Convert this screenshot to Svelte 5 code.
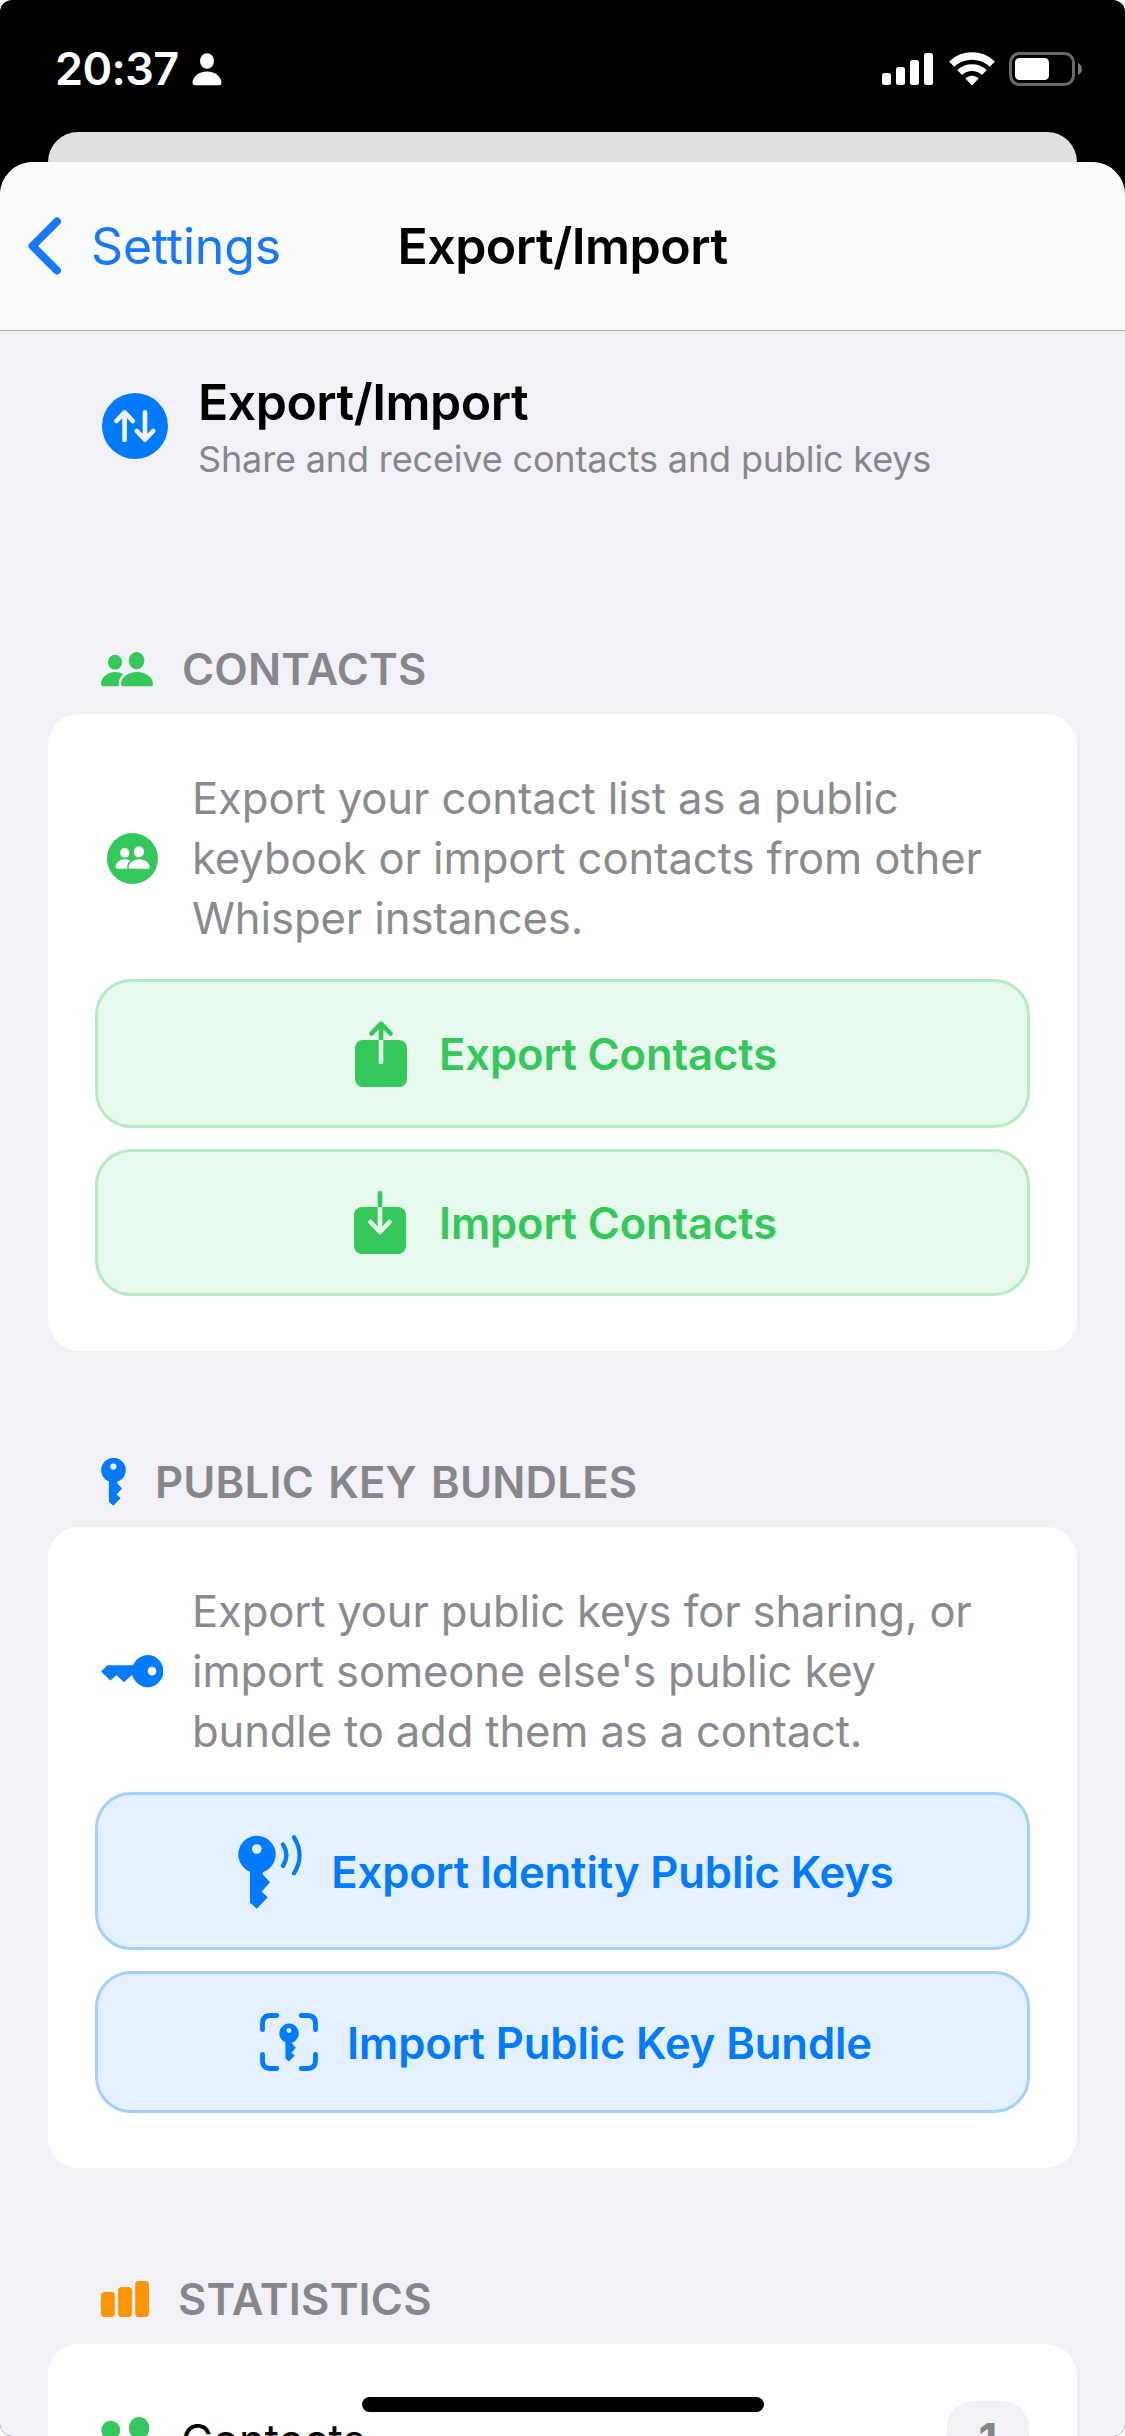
<script lang="ts">
type IconName =
	| "people"
	| "peopleCircle"
	| "share"
	| "download"
	| "key"
	| "keyHorizontal"
	| "keyWaves"
	| "keyViewfinder"
	| "bars";

type Action = {
	label: string;
	icon: IconName;
	size: string;
};

type Section = {
	title: string;
	tint: string;
	icon: IconName;
	infoIcon: IconName;
	text: string;
	actions: Action[];
};

const sections: Section[] = [
	{
		title: "Contacts",
		tint: "green",
		icon: "people",
		infoIcon: "peopleCircle",
		text: "Export your contact list as a public keybook or import contacts from other Whisper instances.",
		actions: [
			{ label: "Export Contacts", icon: "share", size: "export-contacts" },
			{ label: "Import Contacts", icon: "download", size: "import-contacts" },
		],
	},
	{
		title: "Public Key Bundles",
		tint: "blue",
		icon: "key",
		infoIcon: "keyHorizontal",
		text: "Export your public keys for sharing, or import someone else's public key bundle to add them as a contact.",
		actions: [
			{ label: "Export Identity Public Keys", icon: "keyWaves", size: "export-keys" },
			{ label: "Import Public Key Bundle", icon: "keyViewfinder", size: "import-keys" },
		],
	},
];

const contactCount = 1;
</script>

{#snippet peopleShape()}
	<ellipse cx="14" cy="10.2" rx="7.1" ry="7.4" />
	<ellipse cx="35.6" cy="8.6" rx="7.8" ry="8.6" />
	<path d="M0 32C0 25 7 20 14 20q5 0 8.3 2.2C19 25 17.2 28.6 17.8 34.3H3Q0 34.3 0 32Z" />
	<path d="M20 32c0-6 6.5-12 16-12s16 6 16 12q0 2.3-3 2.3H23q-3 0-3-2.3Z" />
{/snippet}

{#snippet keyShape()}
	<path
		fill-rule="evenodd"
		d="M12 35.8A18.7 18.7 0 1 1 24.8 36.2V38.4L32 46.3l-8.3 9.4 6.1 5.6-11.1 11.4-6.7-6ZM18.8 8.2a4.8 4.8 0 1 0 .01 9.6a4.8 4.8 0 1 0-.01-9.6Z"
	/>
{/snippet}

{#snippet icon(name: IconName)}
	{#if name === "people"}
		<svg width="52" height="35" viewBox="0 0 52 35" fill="currentColor">
			{@render peopleShape()}
		</svg>
	{:else if name === "peopleCircle"}
		<svg width="51" height="51" viewBox="0 0 51 51" fill="currentColor">
			<circle cx="25.5" cy="25.5" r="25.5" />
			<g fill="#fff" transform="translate(8.6 13.2) scale(0.655)">
				{@render peopleShape()}
			</g>
		</svg>
	{:else if name === "share"}
		<svg width="60" height="66" viewBox="0 0 60 66" fill="none" stroke-width="4.6" stroke-linecap="round" stroke-linejoin="round">
			<rect x="4" y="19" width="52" height="47" rx="8" fill="currentColor" />
			<path d="M30 3v16M20.5 12.5 30 2.6l9.5 9.9" stroke="currentColor" />
			<path d="M27.7 19h4.6v22a2.3 2.3 0 0 1-4.6 0Z" fill="#e7f8ec" />
		</svg>
	{:else if name === "download"}
		<svg width="60" height="63" viewBox="0 0 60 63" fill="none" stroke-width="4.6" stroke-linecap="round" stroke-linejoin="round">
			<path d="M29 2.4v15" stroke="currentColor" />
			<rect x="3" y="16" width="52" height="47" rx="8" fill="currentColor" />
			<path d="M26.7 16h4.6v22h-4.6Z" fill="#e7f8ec" />
			<path d="M19.5 31 29 41l9.5-10" stroke="#e7f8ec" />
		</svg>
	{:else if name === "key"}
		<svg width="25" height="48" viewBox="0 0 38 73" fill="currentColor">
			{@render keyShape()}
		</svg>
	{:else if name === "keyHorizontal"}
		<svg width="62" height="33" viewBox="0 0 62 33" fill="currentColor">
			<path
				fill-rule="evenodd"
				d="M6.5 10.3H32A15.7 16.1 0 1 1 32 22L30.8 20 23 27.2 15.4 20l-6 5.4L0 16.4ZM51 11.8a4.3 4.3 0 1 0 .01 8.6a4.3 4.3 0 1 0-.01-8.6Z"
			/>
		</svg>
	{:else if name === "keyWaves"}
		<svg width="69" height="75" viewBox="-4 0 69 75" fill="currentColor">
			<g transform="translate(0 2)">
				{@render keyShape()}
			</g>
			<path
				d="M45 10.5c4.3 6.5 4.3 14.5 0 21.5M56 3.3c7.3 11.5 7.3 24.5 0 36"
				fill="none"
				stroke="currentColor"
				stroke-width="4.3"
				stroke-linecap="round"
			/>
		</svg>
	{:else if name === "keyViewfinder"}
		<svg width="63" height="58" viewBox="-4 0 63 58" fill="currentColor">
			<path
				d="M16.8 2.5h-6.3q-8 0-8 8v6.2M41.2 2.5h6.3q8 0 8 8v6.2M16.8 55.5h-6.3q-8 0-8-8v-6.2M41.2 55.5h6.3q8 0 8-8v-6.2"
				fill="none"
				stroke="currentColor"
				stroke-width="4.8"
				stroke-linecap="round"
			/>
			<g transform="translate(19.2 10.7) scale(0.52)">
				{@render keyShape()}
			</g>
		</svg>
	{:else if name === "bars"}
		<svg width="48" height="36" viewBox="0 0 48 36" fill="currentColor">
			<rect x="0" y="11" width="13.8" height="25" rx="3.5" />
			<rect x="17.1" y="6" width="13.8" height="30" rx="3.5" />
			<rect x="34.2" y="0" width="13.8" height="36" rx="3.5" />
		</svg>
	{/if}
{/snippet}

<div class="screen">
	<header class="status-bar">
		<div class="status-left">
			<span class="time">20:37</span>
			<svg width="30" height="33" viewBox="0 0 30 33" fill="#fff">
				<ellipse cx="15" cy="8" rx="7" ry="7.7" />
				<path d="M.5 30C.5 24 6.5 18.5 15 18.500S29.500 24 29.500 30q0 2.300-2.500 2.300H3Q.5 32.300.5 30Z" />
			</svg>
		</div>
		<div class="status-right">
			<svg width="52" height="34" viewBox="0 0 52 34" fill="#fff">
				<rect x="0" y="21" width="9" height="12" rx="2.5" />
				<rect x="14" y="15" width="9" height="18" rx="2.5" />
				<rect x="28" y="8" width="9" height="25" rx="2.5" />
				<rect x="42" y="1" width="9" height="32" rx="2.5" />
			</svg>
			<svg width="46" height="34" viewBox="-23 -33.5 46 34" fill="none" stroke="#fff">
				<path d="M-20.4-21.3A29.5 29.5 0 0 1 20.4-21.3" stroke-width="7.4" />
				<path d="M-12.4-13A18 18 0 0 1 12.4-13" stroke-width="6.8" />
				<path d="M0 0-6.8-7.2A10.2 10.2 0 0 1 6.8-7.2Z" fill="#fff" stroke="none" />
			</svg>
			<svg width="74" height="34" viewBox="0 0 74 34" fill="none">
				<rect x="1.5" y="1.5" width="63" height="31" rx="9" stroke="#6a6a6a" stroke-width="3" />
				<rect x="6" y="6" width="34" height="22" rx="4.5" fill="#fff" />
				<path d="M69 11q4 1.8 4 6t-4 6Z" fill="#7a7a7a" />
			</svg>
		</div>
	</header>

	<div class="sheet-behind"></div>

	<main class="sheet">
		<nav class="nav-bar">
			<button class="back">
				<svg width="34" height="58" viewBox="0 0 34 58" fill="none" stroke="currentColor" stroke-width="8" stroke-linecap="round" stroke-linejoin="round">
					<path d="M29 4.5 4.5 29 29 53.500" />
				</svg>
				Settings
			</button>
			<h1>Export/Import</h1>
		</nav>

		<div class="intro">
			<svg width="66" height="66" viewBox="0 0 66 66" fill="none" stroke="#f2f1f7" stroke-width="4.7" stroke-linecap="round" stroke-linejoin="round">
				<circle cx="33" cy="33" r="33" fill="#007aff" stroke="none" />
				<path d="M22.6 47V20M14.4 28l8.2-8.600 8.200 8.600" />
				<path d="M43 19.4V46M34.8 38l8.2 8.600 8.200-8.600" />
			</svg>
			<div>
				<h2>Export/Import</h2>
				<p>Share and receive contacts and public keys</p>
			</div>
		</div>

		{#each sections as section}
			<section class={section.tint}>
				<h3 class="section-title">
					{@render icon(section.icon)}
					<span>{section.title}</span>
				</h3>
				<div class="card">
					<div class="info">
						<span class="info-icon">{@render icon(section.infoIcon)}</span>
						<p>{section.text}</p>
					</div>
					{#each section.actions as action}
						<button class="action {action.size}">
							{@render icon(action.icon)}
							<span>{action.label}</span>
						</button>
					{/each}
				</div>
			</section>
		{/each}

		<section class="orange">
			<h3 class="section-title">
				{@render icon("bars")}
				<span>Statistics</span>
			</h3>
			<div class="card stats">
				<div class="stat-row">
					<svg class="stat-icon" width="69" height="46" viewBox="0 0 52 35" fill="currentColor">
						{@render peopleShape()}
					</svg>
					<span class="stat-label">Contacts</span>
					<span class="count">{contactCount}</span>
				</div>
			</div>
		</section>
	</main>

	<div class="home-indicator"></div>
</div>

<style>
	:global(body) {
		background: #fff;
	}

	.screen {
		position: relative;
		width: 1125px;
		height: 2436px;
		display: flex;
		flex-direction: column;
		overflow: hidden;
		border-radius: 12px;
		background: #000;
		font-family: Inter, "Liberation Sans", sans-serif;
	}

	svg {
		display: block;
		flex-shrink: 0;
	}

	h1,
	h2,
	h3,
	p {
		margin: 0;
	}

	button {
		font: inherit;
		cursor: pointer;
	}

	.status-bar {
		flex: none;
		box-sizing: border-box;
		height: 132px;
		padding: 39px 42px 33px 55px;
		display: flex;
		align-items: center;
		justify-content: space-between;
		color: #fff;
	}

	.status-left {
		display: flex;
		align-items: center;
		gap: 13px;
	}

	.time {
		font-size: 45px;
		font-weight: 600;
		line-height: 60px;
		letter-spacing: -0.6px;
	}

	.status-right {
		display: flex;
		align-items: center;
		gap: 14.500px;
	}

	.sheet-behind {
		flex: none;
		height: 30px;
		margin: 0 48px;
		border-radius: 30px 30px 0 0;
		background: #e0e0e0;
	}

	.sheet {
		flex: 1;
		min-height: 0;
		border-radius: 33px 33px 0 0;
		background: #f2f1f7;
		overflow: hidden;
	}

	.nav-bar {
		box-sizing: border-box;
		height: 169px;
		padding: 0 28px;
		display: grid;
		grid-template-columns: 1fr auto 1fr;
		align-items: center;
		background: #fbfbfd;
		border-bottom: 1px solid #a9a9ae;
	}

	.back {
		display: flex;
		align-items: center;
		gap: 29px;
		padding: 0;
		border: none;
		background: none;
		color: #1677ff;
		font-size: 50px;
		line-height: 60px;
		letter-spacing: -0.2px;
	}

	h1,
	h2 {
		font-size: 50px;
		font-weight: 600;
		line-height: 60px;
		letter-spacing: -0.5px;
		color: #000;
	}

	.intro {
		display: flex;
		gap: 30px;
		height: 114px;
		margin: 41px 0 138px;
		padding-left: 102px;
	}

	.intro svg {
		margin-top: 21px;
	}

	.intro p {
		font-size: 36px;
		line-height: 54px;
		letter-spacing: -0.15px;
		color: #86868b;
	}

	section + section {
		margin-top: 86px;
	}

	.green {
		--tint: #34c759;
		--fill: #e7f8ec;
		--line: #b6eac3;
	}

	.blue {
		--tint: #007aff;
		--fill: #e4f0ff;
		--line: #a3d0ff;
	}

	.orange {
		--tint: #ff9500;
	}

	.section-title {
		height: 90px;
		padding-left: 101px;
		display: flex;
		align-items: center;
		gap: 29px;
		color: var(--tint);
		font-size: 43.6px;
		font-weight: 600;
		letter-spacing: 0.2px;
		word-spacing: 3px;
		text-transform: uppercase;
	}

	.section-title span {
		color: #86868b;
	}

	.card {
		margin: 0 48px;
		padding: 54px 47px 55px;
		display: flex;
		flex-direction: column;
		gap: 21px;
		border-radius: 31px;
		background: #fff;
	}

	.info {
		display: flex;
		align-items: center;
		gap: 29px;
		margin-bottom: 10px;
		padding: 0 24px 0 6px;
	}

	.info-icon {
		flex: none;
		width: 62px;
		display: flex;
		justify-content: center;
		color: var(--tint);
	}

	.info p {
		margin: 1px 0 -1px;
		font-size: 43.6px;
		line-height: 60px;
		letter-spacing: -0.1px;
		color: #8a8a8e;
	}

	.blue .info p {
		letter-spacing: -0.16px;
	}

	.action {
		box-sizing: border-box;
		display: flex;
		align-items: center;
		justify-content: center;
		gap: 28px;
		padding: 0 0 0 3px;
		border: 3px solid var(--line);
		border-radius: 36px;
		background: var(--fill);
		color: var(--tint);
		font-size: 43.6px;
		font-weight: 600;
		letter-spacing: -0.12px;
	}

	.action span {
		padding-top: 2px;
	}

	.export-contacts {
		height: 149px;
	}

	.import-contacts {
		height: 147px;
	}

	.export-keys {
		height: 158px;
	}

	.import-keys {
		height: 142px;
	}

	.stats {
		padding: 57px 48px 55px 44px;
	}

	.stat-row {
		display: flex;
		align-items: center;
	}

	.stat-icon {
		color: #34c759;
	}

	.stat-label {
		flex: 1;
		margin-left: 20px;
		font-size: 43.6px;
		color: #000;
	}

	.count {
		width: 82px;
		height: 78px;
		border-radius: 26px;
		background: #f2f1f7;
		color: #86868b;
		font-size: 43.6px;
		font-weight: 700;
		line-height: 78px;
		text-align: center;
	}

	/* floats above the scrolled list */
	.home-indicator {
		position: absolute;
		left: 362px;
		bottom: 24px;
		width: 402px;
		height: 15px;
		border-radius: 8px;
		background: #000;
	}
</style>
